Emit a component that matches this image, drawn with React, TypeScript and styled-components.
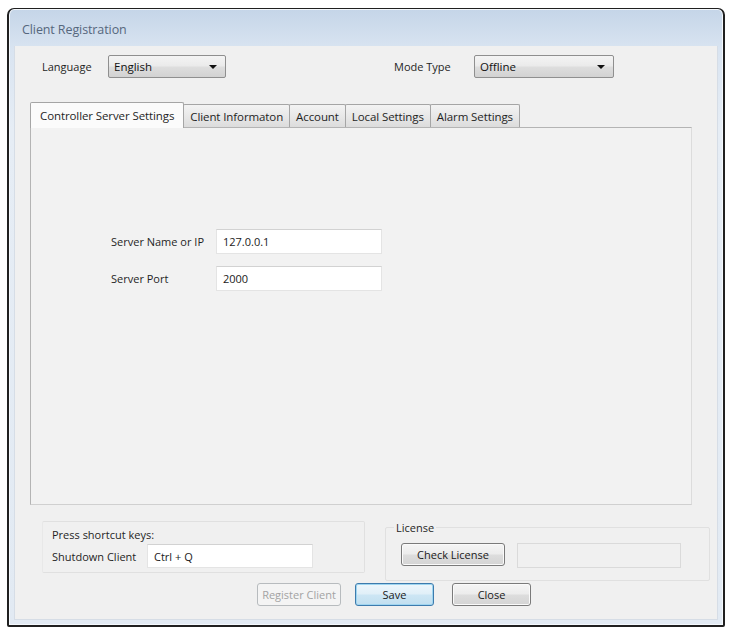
import React from 'react'
import styled, { createGlobalStyle, css } from 'styled-components'

const GlobalStyle = createGlobalStyle`
	html, body {
		margin: 0;
		padding: 0;
		background: #ffffff;
	}
	body {
		font-family: 'Open Sans', 'DejaVu Sans', sans-serif;
		font-size: 11px;
		color: #1f1f1f;
	}
`

const Page = styled.div`
	width: 731px;
	height: 629px;
	padding: 8px 0 0 7px;
	box-sizing: border-box;
`

const Window = styled.div`
	width: 718px;
	height: 619px;
	box-sizing: border-box;
	border: 2px solid #202020;
	border-top-width: 1px;
	border-radius: 7px 7px 2px 2px;
	background: linear-gradient(to bottom, #c5d5e8 0px, #d9e4f1 40px, #e6edf5 120px, #e2eaf3 100%);
	box-shadow: inset 0 0 0 1px #f4f8fc;
	display: flex;
	flex-direction: column;
`

const TitleBar = styled.div`
	height: 37px;
	display: flex;
	align-items: center;
	padding-left: 13px;
	padding-top: 3px;
	box-sizing: border-box;
	font-size: 12.5px;
	color: #56677d;
	letter-spacing: -0.1px;
`

const Client = styled.div`
	flex: 1;
	margin: 0 5px 5px 5px;
	background: #f0f0f0;
	border: 1px solid #d6dde6;
	border-top: none;
	display: flex;
	flex-direction: column;
`

const TopRow = styled.div`
	display: flex;
	align-items: center;
	margin-top: 9px;
	padding-left: 27px;
`

const Label = styled.span<{ $width: number; $gap?: number }>`
	width: ${(p) => p.$width}px;
	margin-left: ${(p) => p.$gap ?? 0}px;
	flex-shrink: 0;
	white-space: nowrap;
`

const Combo = styled.div<{ $width: number }>`
	width: ${(p) => p.$width}px;
	height: 23px;
	box-sizing: border-box;
	border: 1px solid #8f8f8f;
	border-radius: 2px;
	background: linear-gradient(to bottom, #f4f4f4 0%, #ebebeb 45%, #dddddd 55%, #d2d2d2 100%);
	display: flex;
	align-items: center;
	justify-content: space-between;
	padding: 0 8px 0 5px;
	color: #111;
	font-size: 11.5px;
`

const Arrow = styled.span`
	width: 0;
	height: 0;
	border-left: 4px solid transparent;
	border-right: 4px solid transparent;
	border-top: 4px solid #111;
`

const TabStrip = styled.div`
	display: flex;
	align-items: flex-end;
	margin: 24px 0 0 15px;
	height: 25px;
`

const Tab = styled.div<{ $active?: boolean }>`
	height: 23px;
	box-sizing: border-box;
	padding: 0 ${(p) => (p.$active ? 9 : 6)}px;
	display: flex;
	align-items: center;
	border: 1px solid #a5a5a5;
	border-bottom: none;
	border-radius: 2px 2px 0 0;
	margin-right: -1px;
	white-space: nowrap;
	font-size: 11.5px;
	letter-spacing: -0.1px;
	position: relative;
	z-index: ${(p) => (p.$active ? 2 : 1)};
	background: ${(p) =>
		p.$active ? '#fbfbfb' : 'linear-gradient(to bottom, #f3f3f3 0%, #e8e8e8 50%, #dcdcdc 100%)'};
	${(p) =>
		p.$active &&
		css`
			margin-bottom: -1px;
			height: 26px;
		`}
`

const TabPanel = styled.div`
	width: 662px;
	height: 378px;
	margin-left: 15px;
	box-sizing: border-box;
	border: 1px solid #b4b4b4;
	border-right-color: #dcdcdc;
	border-bottom-color: #d0d0d0;
	background: #f2f2f2;
	padding: 101px 0 0 80px;
	display: flex;
	flex-direction: column;
	gap: 12px;
`

const FormRow = styled.div`
	display: flex;
	align-items: center;
`

const TextBox = styled.div<{ $width: number; $height?: number }>`
	width: ${(p) => p.$width}px;
	height: ${(p) => p.$height ?? 25}px;
	box-sizing: border-box;
	background: #ffffff;
	border: 1px solid #e4e4e4;
	border-top-color: #d2d2d2;
	display: flex;
	align-items: center;
	padding-left: 6px;
	color: #1a1a1a;
`

const BottomRow = styled.div`
	display: flex;
	align-items: flex-start;
	margin-top: 16px;
	padding-left: 27px;
	gap: 20px;
`

const Group = styled.div<{ $width: number; $height: number }>`
	width: ${(p) => p.$width}px;
	height: ${(p) => p.$height}px;
	box-sizing: border-box;
	border: 1px solid #e0e0e0;
	border-radius: 2px;
	position: relative;
	display: flex;
	flex-direction: column;
`

const Legend = styled.span<{ $left: number }>`
	position: absolute;
	top: -6px;
	left: ${(p) => p.$left}px;
	padding: 0 2px;
	background: #f0f0f0;
	line-height: 12px;
`

const ShortcutGroup = styled(Group)`
	padding: 5px 0 0 9px;
	gap: 2px;
	border-left-color: #e8e8e8;
`

const LicenseGroup = styled(Group)`
	padding: 15px 0 0 15px;
	flex-direction: row;
	gap: 12px;
	margin-top: 6px;
`

const Button = styled.button<{ $width: number; $primary?: boolean }>`
	width: ${(p) => p.$width}px;
	height: 23px;
	box-sizing: border-box;
	font-family: 'Open Sans', 'DejaVu Sans', sans-serif;
	font-size: 11px;
	color: #1a1a1a;
	border: 1px solid #7a7a7a;
	border-radius: 3px;
	background: linear-gradient(to bottom, #f5f5f5 0%, #ececec 48%, #dddddd 52%, #d4d4d4 100%);
	box-shadow: inset 0 0 0 1px #fafafa;
	padding: 0;
	cursor: default;
	${(p) =>
		p.$primary &&
		css`
			border-color: #3d7bad;
			background: linear-gradient(to bottom, #eef7fc 0%, #e0eff8 48%, #cde6f4 52%, #c1dff0 100%);
			box-shadow: inset 0 0 0 1px #9fd5f0;
		`}
	&:disabled {
		color: #a3a3a3;
		border-color: #b7bbbe;
		background: #f4f4f4;
		box-shadow: none;
	}
`

const DisabledBox = styled.div`
	width: 164px;
	height: 25px;
	box-sizing: border-box;
	border: 1px solid #dadada;
	background: #f0f0f0;
`

const ButtonRow = styled.div`
	display: flex;
	margin: 2px 0 0 242px;
	gap: 14px;
	& > :last-child {
		margin-left: 4px;
	}
`

export default function App() {
	return (
		<>
			<GlobalStyle />
			<Page>
				<Window>
					<TitleBar>Client Registration</TitleBar>
					<Client>
						<TopRow>
							<Label $width={66}>Language</Label>
							<Combo $width={118}>
								English
								<Arrow />
							</Combo>
							<Label $width={80} $gap={168}>
								Mode Type
							</Label>
							<Combo $width={140}>
								Offline
								<Arrow />
							</Combo>
						</TopRow>

						<TabStrip>
							<Tab $active>Controller Server Settings</Tab>
							<Tab>Client Informaton</Tab>
							<Tab>Account</Tab>
							<Tab>Local Settings</Tab>
							<Tab>Alarm Settings</Tab>
						</TabStrip>
						<TabPanel>
							<FormRow>
								<Label $width={105}>Server Name or IP</Label>
								<TextBox $width={166}>127.0.0.1</TextBox>
							</FormRow>
							<FormRow>
								<Label $width={105}>Server Port</Label>
								<TextBox $width={166}>2000</TextBox>
							</FormRow>
						</TabPanel>

						<BottomRow>
							<ShortcutGroup $width={323} $height={52}>
								<span>Press shortcut keys:</span>
								<FormRow>
									<Label $width={95}>Shutdown Client</Label>
									<TextBox $width={166} $height={24}>
										Ctrl + Q
									</TextBox>
								</FormRow>
							</ShortcutGroup>
							<LicenseGroup $width={325} $height={54}>
								<Legend $left={8}>License</Legend>
								<Button $width={104}>Check License</Button>
								<DisabledBox />
							</LicenseGroup>
						</BottomRow>

						<ButtonRow>
							<Button $width={84} disabled>
								Register Client
							</Button>
							<Button $width={79} $primary>
								Save
							</Button>
							<Button $width={79}>Close</Button>
						</ButtonRow>
					</Client>
				</Window>
			</Page>
		</>
	)
}
